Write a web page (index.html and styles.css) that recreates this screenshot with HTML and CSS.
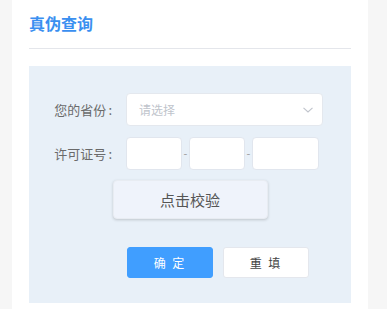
FILE: index.html
```html
<!DOCTYPE html>
<html lang="zh">
<head>
<meta charset="utf-8">
<link rel="stylesheet" href="styles.css">
</head>
<body>
<div class="card">
  <h1 class="title">真伪查询</h1>
  <div class="divider"></div>
  <div class="panel">
    <div class="form">
      <div class="label">您的省份<span class="colon">:</span></div>
      <div class="select">
        <span class="placeholder">请选择</span>
        <svg class="chev" width="10" height="6" viewBox="0 0 10 6"><path d="M0.5 0.8 L5 5 L9.5 0.8" fill="none" stroke="#c0c4cc" stroke-width="1.1"/></svg>
      </div>
      <div class="label">许可证号<span class="colon">:</span></div>
      <div class="codes">
        <div class="box b1"></div><span class="dash">-</span><div class="box b2"></div><span class="dash">-</span><div class="box b3"></div>
      </div>
    </div>
    <div class="verify-wrap"><button class="verify">点击校验</button></div>
    <div class="actions">
      <button class="btn primary">确 定</button>
      <button class="btn plain">重 填</button>
    </div>
  </div>
</div>
</body>
</html>
```
FILE: styles.css
```css
html, body {
  margin: 0;
  padding: 0;
  background: #f6f6f6;
  font-family: "Noto Sans CJK SC", "Noto Sans", sans-serif;
}
.card {
  margin-left: 12px;
  width: 322px;
  height: 309px;
  padding: 0 17px;
  background: #fff;
  overflow: hidden;
}
.title {
  margin: 0;
  padding-top: 12px;
  height: 24px;
  font-size: 16px;
  line-height: 22px;
  font-weight: bold;
  color: #3a8ff0;
}
.divider {
  margin-top: 12px;
  height: 1px;
  background: #e4e6eb;
}
.panel {
  margin-top: 17px;
  height: 237px;
  background: #e8f0f8;
  padding-top: 27px;
  box-sizing: border-box;
}
.form {
  display: grid;
  grid-template-columns: 97px auto;
  row-gap: 11px;
  align-items: center;
}
.label {
  text-align: right;
  font-size: 13px;
  color: #6a6a6a;
  line-height: 33px;
  padding-right: 15px;
  margin-right: -1px;
}
.colon {
  margin-left: 2px;
}
.select {
  width: 197px;
  height: 33px;
  box-sizing: border-box;
  background: #fff;
  border: 1px solid #e4e8ee;
  border-radius: 4px;
  display: flex;
  align-items: center;
  justify-content: space-between;
  padding: 0 9px 0 12px;
}
.placeholder {
  font-size: 12px;
  color: #c0c4cc;
}
.chev { display: block; }
.codes {
  display: flex;
  align-items: center;
}
.box {
  height: 33px;
  box-sizing: border-box;
  background: #fff;
  border: 1px solid #e1e6ee;
  border-radius: 4px;
}
.b1 { width: 56px; }
.b2 { width: 56px; }
.b3 { width: 67px; }
.dash {
  width: 7px;
  text-align: center;
  font-size: 11px;
  color: #999;
  line-height: 33px;
}
.verify-wrap {
  display: flex;
  justify-content: center;
  margin-top: 10px;
}
.verify {
  width: 155px;
  height: 39px;
  border: 1px solid #e8ecf2;
  border-radius: 4px;
  background: #eff3fb;
  box-shadow: 0 1px 3px rgba(0,0,0,0.18);
  font-family: inherit;
  font-size: 15px;
  color: #555;
  padding: 0;
}
.actions {
  display: flex;
  gap: 10px;
  margin-top: 28px;
  padding-left: 98px;
}
.btn {
  height: 31px;
  border-radius: 3px;
  font-family: inherit;
  font-size: 12px;
  letter-spacing: 2px;
  padding: 0;
}
.primary {
  width: 86px;
  background: #409eff;
  border: 1px solid #409eff;
  color: #fff;
}
.plain {
  width: 86px;
  background: #fff;
  border: 1px solid #e4e7ed;
  color: #444;
}
```
